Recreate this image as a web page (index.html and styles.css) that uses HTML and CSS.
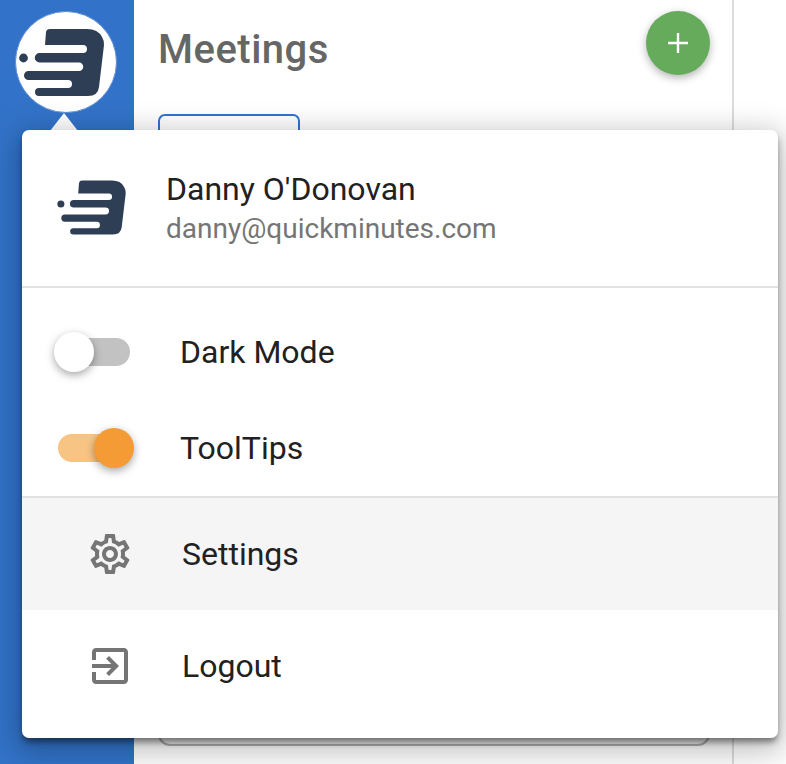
FILE: index.html
```html
<!DOCTYPE html>
<html lang="en">
<head>
<meta charset="utf-8">
<title>Meetings</title>
<link rel="stylesheet" href="styles.css">
</head>
<body>
<svg class="defs" width="0" height="0" aria-hidden="true">
  <symbol id="logo" viewBox="0 0 90 72">
    <path fill="#2e3e54" d="M27 5 Q27.500 2 31 2 H68 Q79 2 83 10 Q85 13 85 18 L80 60 Q79 69 69 69 H20 a4 4 0 0 1 0 -8 H49 a4 4 0 0 0 0 -8 H9.500 a4.500 4.500 0 0 1 0 -9 H60 a4.250 4.250 0 0 0 0 -8.500 H20.500 a4.750 4.750 0 0 1 0 -9.500 H64 a4 4 0 0 0 0 -8 H26 Z"/>
    <circle fill="#2e3e54" cx="4.500" cy="31" r="4.400"/>
  </symbol>
</svg>
<div class="app">
  <aside class="sidebar">
    <div class="avatar"><svg class="avatar-logo"><use href="#logo"/></svg></div>
  </aside>
  <main class="main">
    <header class="main-head">
      <h1 class="title">Meetings</h1>
      <button class="fab" aria-label="Add">
        <svg width="22" height="22" viewBox="0 0 22 22"><path d="M11 1v20M1 11h20" stroke="#fff" stroke-width="2.400" fill="none"/></svg>
      </button>
    </header>
    <div class="tab"></div>
    <div class="spacer"></div>
    <div class="search"></div>
  </main>
</div>
<div class="menu-arrow"></div>
<section class="menu">
  <div class="profile">
    <svg class="profile-logo"><use href="#logo"/></svg>
    <div class="profile-text">
      <div class="profile-name">Danny O'Donovan</div>
      <div class="profile-mail">danny@quickminutes.com</div>
    </div>
  </div>
  <div class="toggles">
    <div class="toggle-row">
      <span class="switch"><span class="track"></span><span class="thumb"></span></span>
      <span class="label">Dark Mode</span>
    </div>
    <div class="toggle-row">
      <span class="switch on"><span class="track"></span><span class="thumb"></span></span>
      <span class="label">ToolTips</span>
    </div>
  </div>
  <div class="actions">
    <div class="action hover">
      <svg class="icon" viewBox="0 0 24 24"><path fill="#757575" d="M19.43 12.98c.04-.32.07-.64.07-.98s-.03-.66-.07-.98l2.11-1.65c.19-.15.24-.42.12-.64l-2-3.46c-.12-.22-.39-.3-.61-.22l-2.49 1c-.52-.4-1.08-.73-1.69-.98l-.38-2.65C14.46 2.18 14.25 2 14 2h-4c-.25 0-.46.18-.49.42l-.38 2.65c-.61.25-1.17.59-1.69.98l-2.49-1c-.23-.09-.49 0-.61.22l-2 3.46c-.13.22-.07.49.12.64l2.11 1.65c-.04.32-.07.65-.07.98s.03.66.07.98l-2.11 1.65c-.19.15-.24.42-.12.64l2 3.46c.12.22.39.3.61.22l2.49-1c.52.4 1.08.73 1.69.98l.38 2.65c.03.24.24.42.49.42h4c.25 0 .46-.18.49-.42l.38-2.65c.61-.25 1.17-.59 1.69-.98l2.49 1c.23.09.49 0 .61-.22l2-3.46c.12-.22.07-.49-.12-.64l-2.11-1.65zm-1.98-1.71c.04.31.05.52.05.73 0 .21-.02.43-.05.73l-.14 1.13.89.7 1.08.84-.7 1.21-1.27-.51-1.04-.42-.9.68c-.43.32-.84.56-1.25.73l-1.06.43-.16 1.13-.2 1.35h-1.4l-.19-1.35-.16-1.13-1.06-.43c-.43-.18-.83-.41-1.23-.71l-.91-.7-1.06.43-1.27.51-.7-1.21 1.08-.84.89-.7-.14-1.13c-.03-.31-.05-.54-.05-.74s.02-.43.05-.73l.14-1.13-.89-.7-1.08-.84.7-1.21 1.27.51 1.04.42.9-.68c.43-.32.84-.56 1.25-.73l1.06-.43.16-1.13.2-1.35h1.39l.19 1.35.16 1.13 1.06.43c.43.18.83.41 1.23.71l.91.7 1.06-.43 1.27-.51.7 1.21-1.07.85-.89.7.14 1.13zM12 8c-2.21 0-4 1.79-4 4s1.79 4 4 4 4-1.79 4-4-1.79-4-4-4zm0 6c-1.1 0-2-.9-2-2s.9-2 2-2 2 .9 2 2-.9 2-2 2z"/></svg>
      <span class="label">Settings</span>
    </div>
    <div class="action">
      <svg class="icon" viewBox="0 0 24 24"><path fill="#757575" d="M10.09 15.59 11.5 17l5-5-5-5-1.41 1.41L12.67 11H3v2h9.67l-2.58 2.59zM19 3H5c-1.11 0-2 .9-2 2v4h2V5h14v14H5v-4H3v4c0 1.1.89 2 2 2h14c1.1 0 2-.9 2-2V5c0-1.1-.9-2-2-2z"/></svg>
      <span class="label">Logout</span>
    </div>
  </div>
</section>
</body>
</html>
```
FILE: styles.css
```css
* { box-sizing: border-box; }
html, body { margin: 0; height: 100%; }
body {
  position: relative;
  width: 786px;
  height: 764px;
  overflow: hidden;
  background: #fff;
  font-family: Roboto, "Liberation Sans", sans-serif;
  color: #212121;
}
.defs { position: absolute; }
.app { display: flex; height: 764px; }
.sidebar {
  width: 134px;
  flex: none;
  background: #3273c9;
  padding: 11px 0 0 15px;
}
.avatar {
  width: 102px;
  height: 102px;
  border-radius: 50%;
  background: #fff;
  border: 1px solid #5f8fd2;
  padding: 15px 0 0 3px;
}
.avatar-logo { display: block; width: 90px; height: 72px; }
.main {
  width: 600px;
  flex: none;
  border-right: 2px solid #dcdcdc;
  display: flex;
  flex-direction: column;
  padding: 11px 22px 18px 24px;
}
.main-head { display: flex; justify-content: space-between; align-items: flex-start; }
.title {
  margin: 15px 0 0;
  font-size: 40px;
  line-height: 47px;
  font-weight: 500;
  letter-spacing: .5px;
  color: #666;
}
.fab {
  width: 64px;
  height: 64px;
  border: 0;
  padding: 0;
  border-radius: 50%;
  background: #66ab5c;
  display: flex;
  align-items: center;
  justify-content: center;
  box-shadow: 0 3px 8px rgba(0,0,0,.3);
}
.tab {
  width: 142px;
  height: 60px;
  margin-top: 39px;
  border: 2px solid #3273c9;
  border-radius: 7px;
}
.spacer { flex: 1; }
.search {
  height: 60px;
  border: 2px solid #b4b4b4;
  border-radius: 12px;
}
.menu-arrow {
  position: absolute;
  left: 50px;
  top: 113px;
  width: 0;
  height: 0;
  border-left: 14px solid transparent;
  border-right: 14px solid transparent;
  border-bottom: 18px solid #fff;
}
.menu {
  position: absolute;
  left: 22px;
  top: 130px;
  width: 756px;
  height: 608px;
  background: #fff;
  border-radius: 7px;
  box-shadow: 0 5px 6px -1px rgba(0,0,0,.45), 0 8px 30px 6px rgba(0,0,0,.25);
  display: flex;
  flex-direction: column;
}
.profile {
  height: 158px;
  border-bottom: 2px solid #e2e2e2;
  display: flex;
  align-items: center;
  padding: 0 0 0 35px;
  gap: 36px;
}
.profile-logo { width: 73px; height: 58px; flex: none; }
.profile-text { padding-top: 2px; }
.profile-name { font-size: 32px; line-height: 40px; }
.profile-mail { font-size: 28px; line-height: 40px; color: #757575; }
.toggles {
  height: 210px;
  padding-top: 16px;
  border-bottom: 2px solid #e2e2e2;
}
.toggle-row {
  height: 96px;
  display: flex;
  align-items: center;
  padding-left: 32px;
  gap: 46px;
}
.label { font-size: 32px; }
.switch { position: relative; display: block; width: 80px; height: 40px; flex: none; }
.track {
  position: absolute;
  left: 4px;
  top: 6px;
  width: 72px;
  height: 28px;
  border-radius: 14px;
  background: #c2c2c2;
}
.thumb {
  position: absolute;
  left: 0;
  top: 0;
  width: 40px;
  height: 40px;
  border-radius: 50%;
  background: #fff;
  box-shadow: 0 3px 8px rgba(0,0,0,.35);
}
.on .track { background: #f8c484; }
.on .thumb { left: 40px; background: #f49b36; }
.action {
  height: 112px;
  display: flex;
  align-items: center;
  padding-left: 64px;
  gap: 48px;
}
.action.hover { background: #f5f5f5; }
.icon { width: 48px; height: 48px; flex: none; }
```
